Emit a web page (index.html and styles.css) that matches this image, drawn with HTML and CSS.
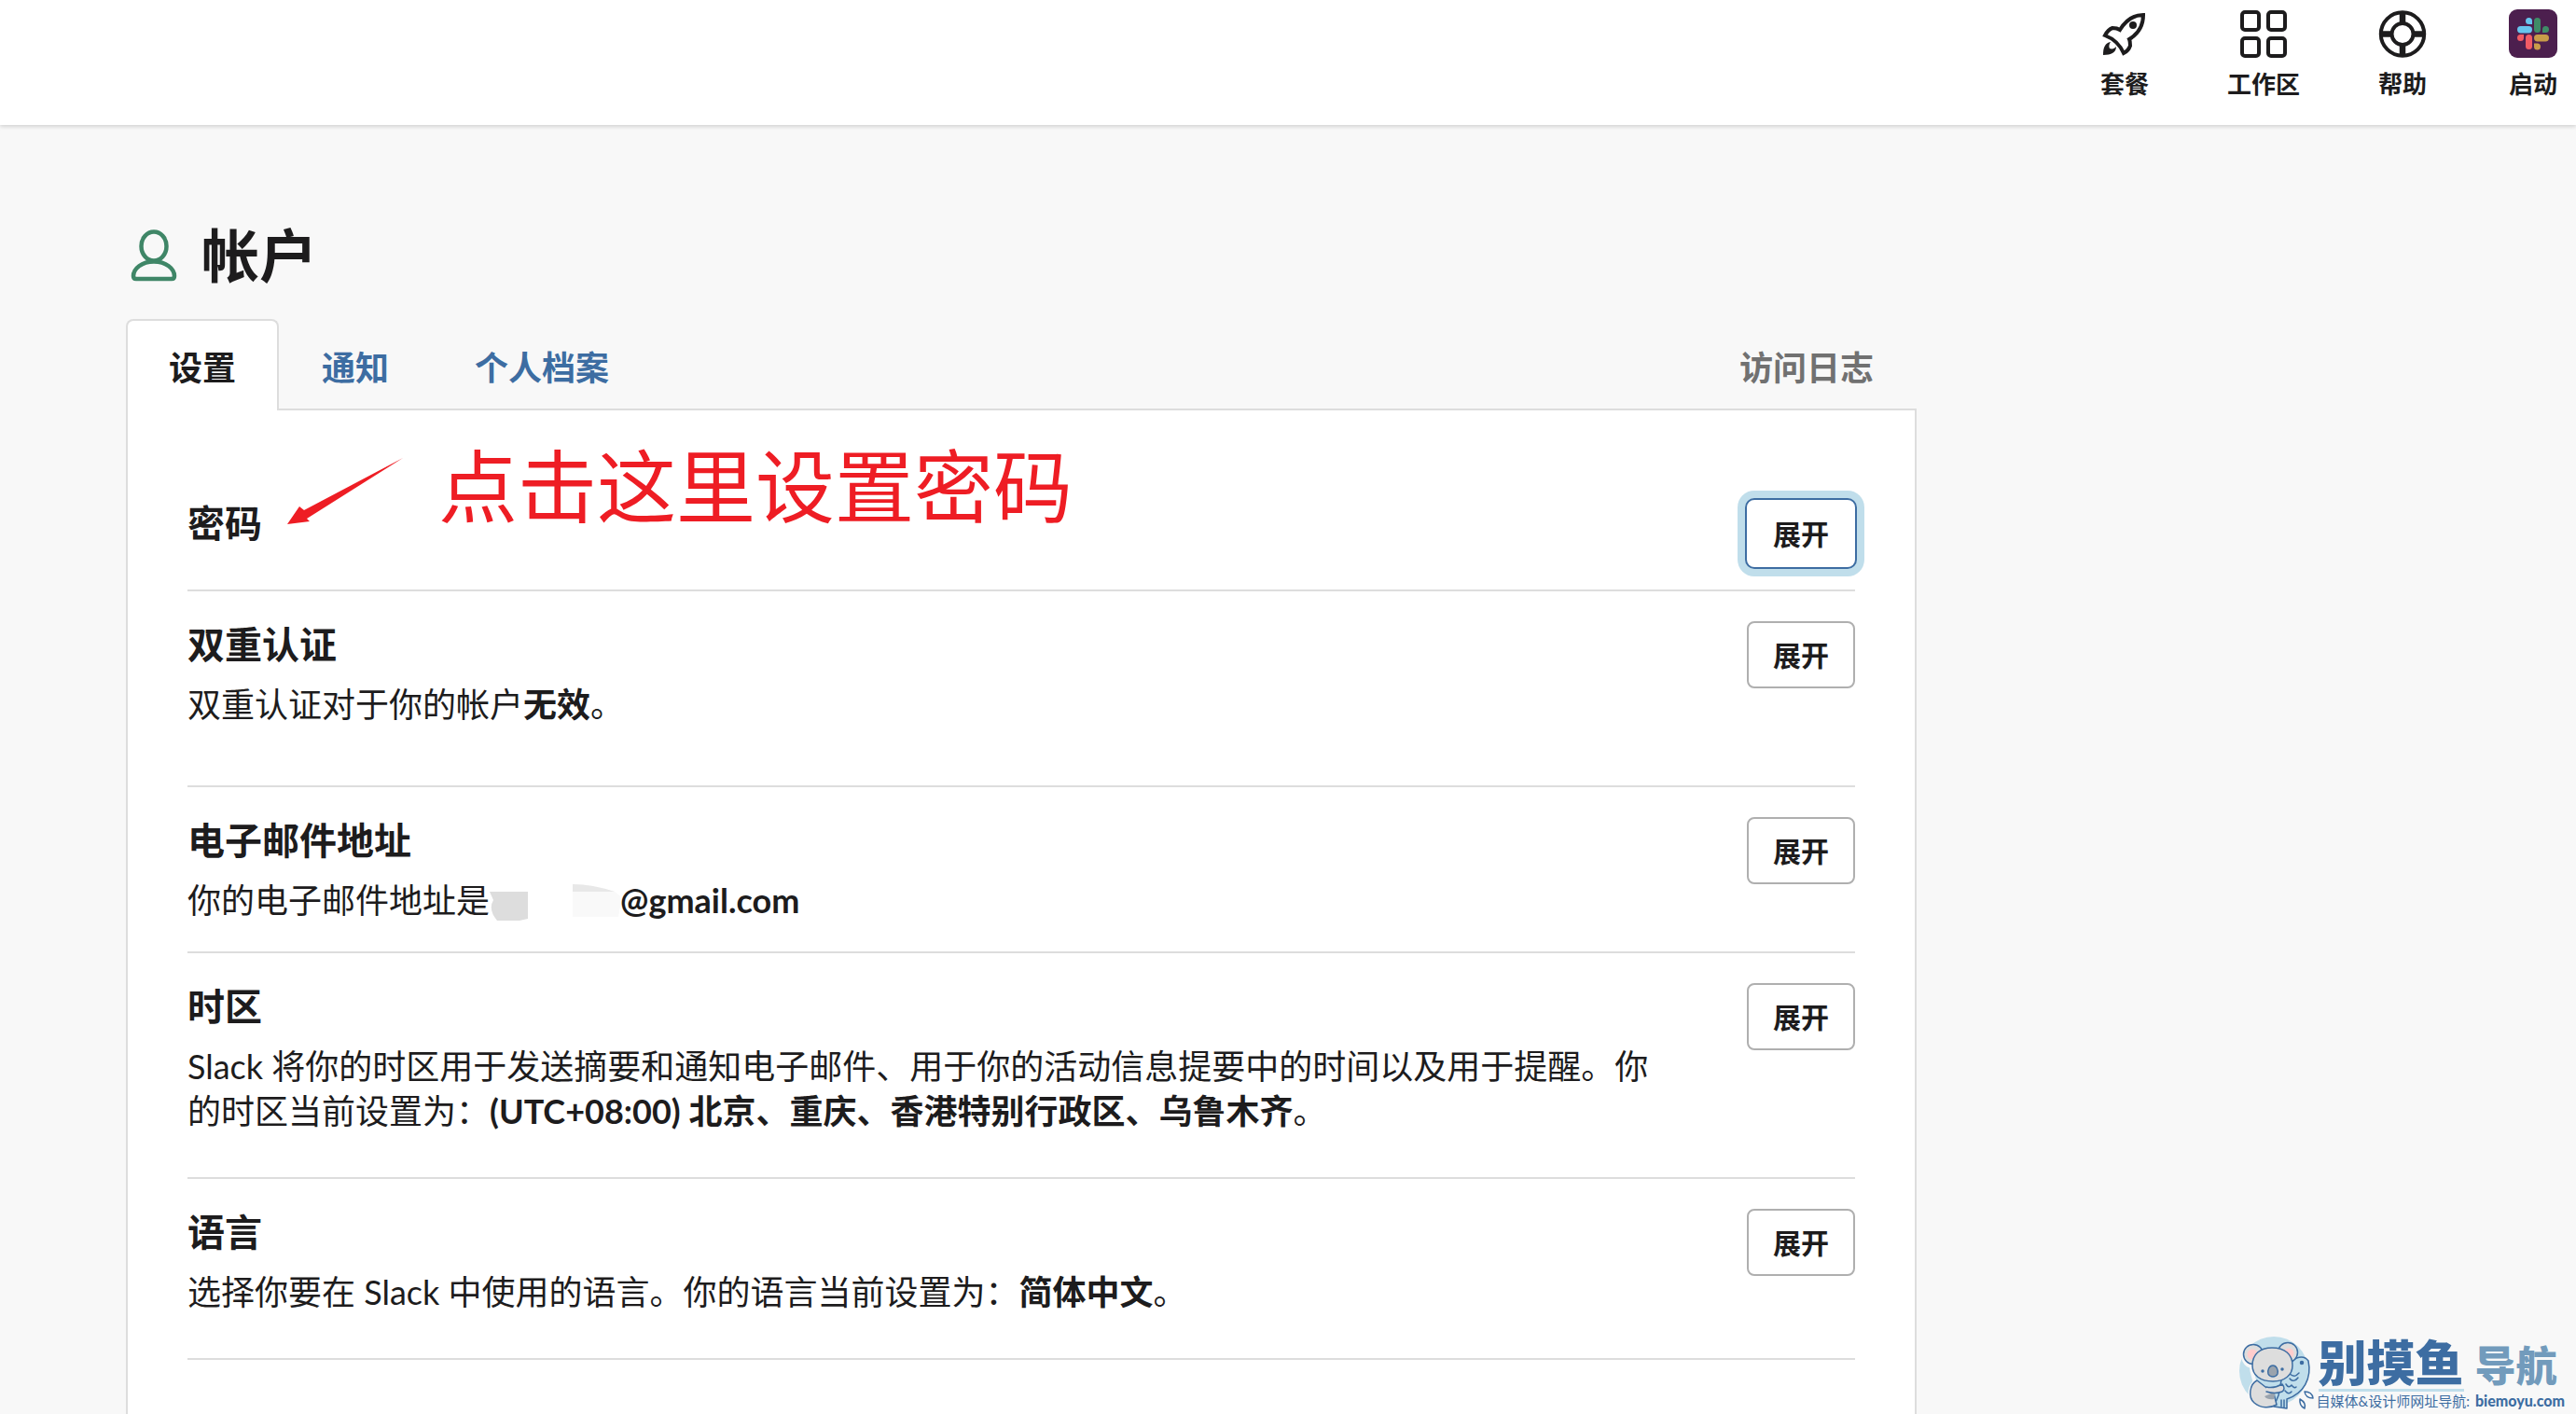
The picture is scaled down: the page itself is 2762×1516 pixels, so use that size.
FILE: index.html
```html
<!DOCTYPE html>
<html lang="zh-CN">
<head>
  <meta charset="UTF-8" />
  <meta name="viewport" content="width=device-width, initial-scale=1.0"/>
  <title>帐户设置 | Slack</title>
  <link rel="stylesheet" href="styles.css">
</head>
<body>
  <header class="topbar">
    <nav class="topnav">
      <a href="#">
        <svg viewBox="0 0 52 52">
          <path d="M46 6 C35 6 27 12 21 22 C18 20 15 20 13 20 C10 21 7 24 5 28 C13 31 21 38 25 47 C29 45 31 42 32 39 C32 36 32 34 31 32 C41 26 46 17 46 6 Z" fill="none" stroke="#1d1c1d" stroke-width="4"/>
          <circle cx="35" cy="17" r="4" fill="#1d1c1d"/>
          <path d="M3 49 C3 41 5 36 11 35 C9 38 9 40 10 42 C13 43 15 42 17 40 C17 46 12 49 3 49 Z" fill="#1d1c1d"/>
        </svg>
        <span>套餐</span>
      </a>
      <a href="#">
        <svg viewBox="0 0 52 52" fill="none" stroke="#1d1c1d" stroke-width="4">
          <rect x="3" y="3" width="18" height="19" rx="3"/>
          <rect x="31" y="3" width="18" height="19" rx="3"/>
          <rect x="3" y="31" width="18" height="19" rx="3"/>
          <rect x="31" y="31" width="18" height="19" rx="3"/>
        </svg>
        <span>工作区</span>
      </a>
      <a href="#">
        <svg viewBox="0 0 52 52" fill="none" stroke="#1d1c1d" stroke-width="4">
          <circle cx="26" cy="26.5" r="23.2"/>
          <circle cx="26" cy="26.5" r="11.5"/>
          <path d="M26 3v12M26 38v12M3 26.5h12M37 26.5h12" stroke-width="6.5"/>
        </svg>
        <span>帮助</span>
      </a>
      <a href="#" class="launch">
        <svg viewBox="0 0 52 52">
          <rect x="0" y="0" width="52" height="52" rx="9" fill="#4c1f4e"/>
          <g fill="#67c5ee"><rect x="9" y="18" width="16" height="7.500" rx="3.700"/><path d="M25 16h-3.500a3.500 3.500 0 1 1 3.500-3.500z"/></g>
          <g fill="#3f8c67"><rect x="27" y="9" width="7" height="16" rx="3.500"/><path d="M36 25v-3.500a3.500 3.500 0 1 1 3.500 3.500z"/></g>
          <g fill="#c99c49"><rect x="27" y="27" width="16" height="7.500" rx="3.700"/><path d="M27 36.500h3.500a3.500 3.500 0 1 1-3.500 3.500z"/></g>
          <g fill="#f15b65"><rect x="18" y="27" width="7" height="16" rx="3.500"/><path d="M16 27v3.500a3.500 3.500 0 1 1-3.500-3.500z"/></g>
        </svg>
        <span>启动</span>
      </a>
    </nav>
  </header>

  <main class="page">
    <h1>
      <svg class="user-icon" viewBox="0 0 50 56" fill="none" stroke="#3f8667" stroke-width="4.500">
        <ellipse cx="25" cy="18" rx="13.500" ry="15.500"/>
        <path d="M25 34.500 C12 34.500 3 42 3 50 Q3 53 6 53 H44 Q47 53 47 50 C47 42 38 34.500 25 34.500 Z"/>
      </svg>
      帐户
    </h1>

    <nav class="tabs">
      <a href="#" class="active">设置</a>
      <a href="#">通知</a>
      <a href="#">个人档案</a>
      <a href="#" class="logs">访问日志</a>
    </nav>

    <div class="card">
      <section class="row">
        <div class="info">
          <h2>密码</h2>
        </div>
        <button type="button" class="focused">展开</button>
        <div class="note">
          <svg viewBox="0 0 124 84"><path d="M124 12 L18 68 L13 64 L0 83 L24 80 L21 77 Z" fill="#ee1d24"/></svg>
          <span>点击这里设置密码</span>
        </div>
      </section>

      <section class="row">
        <div class="info">
          <h2>双重认证</h2>
          <p class="loose">双重认证对于你的帐户<strong>无效</strong>。</p>
        </div>
        <button type="button">展开</button>
      </section>

      <section class="row">
        <div class="info">
          <h2>电子邮件地址</h2>
          <p class="tight">你的电子邮件地址是<svg class="mask" viewBox="0 0 140 40"><path d="M0 9H41V38L32 40H8Q-2 28 4 18Z" fill="#ddd"/><path d="M89 1Q110 1 134 9L140 14V24L138 36H89Z" fill="#f9f9f9"/><path d="M89 1Q110 1 134 9H89Z" fill="#e8e8e8"/></svg><strong>@gmail.com</strong></p>
        </div>
        <button type="button">展开</button>
      </section>

      <section class="row">
        <div class="info">
          <h2>时区</h2>
          <p>Slack 将你的时区用于发送摘要和通知电子邮件、用于你的活动信息提要中的时间以及用于提醒。你的时区当前设置为：<strong>(UTC+08:00) 北京、重庆、香港特别行政区、乌鲁木齐</strong>。</p>
        </div>
        <button type="button">展开</button>
      </section>

      <section class="row">
        <div class="info">
          <h2>语言</h2>
          <p>选择你要在 Slack 中使用的语言。你的语言当前设置为：<strong>简体中文</strong>。</p>
        </div>
        <button type="button">展开</button>
      </section>
    </div>
  </main>

  <div class="watermark">
    <svg class="koala" viewBox="0 0 84 80" fill="none" stroke="#3d6da2" stroke-width="1.500" stroke-linejoin="round" stroke-linecap="round">
      <circle cx="38" cy="38" r="37" fill="#c0deeb" stroke="none"/>
      <!-- pale edge behind the koala -->
      <path d="M6 14 C2 24 8 32 14 33 C14 42 18 46 17 50 C10 58 12 68 18 73" stroke="#f8f8f8" stroke-width="4"/>
      <!-- fish -->
      <path d="M56 30 C60 23 70 20 75 27 C79 46 70 62 52 68 L52 78 L38 76 L43 64 L46 48 Z" fill="#c0deeb"/>
      <path d="M46 69v7M49 69v8"/>
      <path d="M55 41 C60 45 62 43 65 40 M55 46 C58 50 62 48 64 45 M51 52 Q54 57 57 53 Q60 57 62 55 M50 59 Q54 64 57 60"/>
      <circle cx="68" cy="29" r="1.500" fill="#3d6da2"/>
      <!-- body and arms -->
      <path d="M20 48 C12 52 10 66 17 72 C24 78 34 78 41 74 L38 62 Z" fill="#ddd"/>
      <path d="M28 65 L40 60 L38 68 Q31 69 28 65Z" fill="#9aa3ad" stroke="none"/>
      <path d="M30 55 Q38 57 47 52 Q51 57 47 60 Q39 63 30 60" fill="#ddd"/>
      <!-- head -->
      <circle cx="16" cy="20" r="10.500" fill="#ddd"/>
      <circle cx="53" cy="18" r="10.500" fill="#ddd"/>
      <circle cx="15" cy="20" r="5.500" fill="#fcc" stroke="none"/>
      <circle cx="54" cy="19" r="5.500" fill="#fcc" stroke="none"/>
      <path d="M36 13 C50 13 58 20 58 32 C58 42 50 49 37 49 C23 49 15 42 15 32 C15 20 23 13 36 13Z" fill="#ddd"/>
      <path d="M37 32 C41 32 43 37 42 41 C40 45 34 45 32 41 C31 37 33 32 37 32Z" fill="#9aa3ad"/>
      <circle cx="26" cy="38" r="1" fill="#3d6da2"/>
      <circle cx="47" cy="36" r="1" fill="#3d6da2"/>
      <!-- drops -->
      <path d="M71 60 Q79 60 80 67 Q72 67 71 60Z M66 68 Q73 72 71 78 Q65 75 66 68Z" fill="#f8f8f8"/>
    </svg>
    <div class="brand">
      <div class="brand-name"><b>别摸鱼</b><i>导航</i></div>
      <div class="brand-sub">自媒体&amp;设计师网址导航:<b>biemoyu.com</b></div>
    </div>
  </div>
</body>
</html>
```
FILE: styles.css
```css
* {
  box-sizing: border-box;
}
body {
  margin: 0;
  min-height: 100vh;
  background: #f8f8f8;
  color: #1d1c1d;
  font-family: Lato, 'Noto Sans CJK SC', sans-serif;
  font-size: 36px;
  line-height: 48px;
  overflow: hidden;
}
a {
  text-decoration: none;
  color: inherit;
}

/* top bar */
.topbar {
  height: 134px;
  background: white;
  box-shadow: 0 2px 4px rgba(0, 0, 0, 0.15);
}
.topnav {
  display: flex;
  justify-content: flex-end;
  gap: 84px;
  padding: 10px 20px 0 0;
}
.topnav a {
  display: flex;
  flex-direction: column;
  align-items: center;
  gap: 10px;
  font-size: 26px;
  line-height: 36px;
  font-weight: bold;
}
.topnav svg {
  width: 52px;
  height: 52px;
}
.topnav .launch {
  margin-left: 4px;
}

/* page */
.page {
  max-width: 2055px;
  padding-left: 135px;
}
h1 {
  display: flex;
  align-items: center;
  gap: 26px;
  margin: 0;
  padding: 94px 0 22px 5px;
  font-size: 62px;
  line-height: 92px;
}
.user-icon {
  width: 50px;
  height: 56px;
}
.tabs {
  display: flex;
  font-weight: bold;
  color: #3d6da2;
}
.tabs a {
  padding: 26px 44px 20px;
  border: 2px solid transparent;
  border-bottom: none;
}
.tabs .active {
  position: relative;
  margin-bottom: -2px;
  background: white;
  border-color: #ddd;
  border-radius: 8px 8px 0 0;
  color: #1d1c1d;
}
.tabs .logs {
  margin-left: auto;
  color: #717171;
}
.card {
  background: white;
  border: 2px solid #ddd;
  padding: 64px 64px 120px;
}
.row {
  position: relative;
  display: flex;
  justify-content: space-between;
  align-items: flex-start;
  gap: 96px;
  padding: 32px 0 24px;
  border-bottom: 2px solid #ddd;
}
.info {
  flex: 1;
}
h2 {
  margin: 0;
  font-size: 40px;
  line-height: 50px;
}
p {
  margin: 15px 0 23px;
}
.loose {
  margin-bottom: 39px;
}
.tight {
  margin-bottom: 7px;
}
.mask {
  width: 140px;
  height: 40px;
  vertical-align: -8px;
}
button {
  width: 116px;
  height: 72px;
  padding: 0 0 2px;
  background: white;
  border: 2px solid #afafaf;
  border-radius: 8px;
  color: #1d1c1d;
  font-family: inherit;
  font-size: 30px;
  font-weight: bold;
}
.focused {
  border-color: white;
  box-shadow: 0 0 0 2px #3d6da2, 0 0 0 10px #c0deeb;
}

/* red hint over the password row */
.note {
  position: absolute;
  left: 107px;
  top: -33px;
  display: flex;
  align-items: center;
  gap: 38px;
  color: #ee1d24;
  font-size: 85px;
  line-height: 100px;
}
.note svg {
  width: 124px;
  height: 84px;
}

/* site watermark */
.watermark {
  position: absolute;
  right: 12px;
  bottom: 4px;
  display: flex;
  align-items: center;
  color: #3d6da2;
}
.koala {
  width: 84px;
  height: 80px;
}
.brand-name {
  display: flex;
  align-items: flex-end;
  gap: 12px;
  padding-left: 2px;
}
.brand-name b {
  border-bottom: 3px solid #c0deeb;
  font-size: 52px;
  line-height: 56px;
  font-weight: 900;
}
.brand-name i {
  color: #729bbc;
  font-size: 44px;
  line-height: 56px;
  font-style: normal;
  font-weight: 900;
}
.brand-sub {
  display: flex;
  gap: 6px;
  font-size: 15px;
  line-height: 20px;
}
.brand-sub b {
  font-size: 16px;
  font-weight: 900;
}
```
